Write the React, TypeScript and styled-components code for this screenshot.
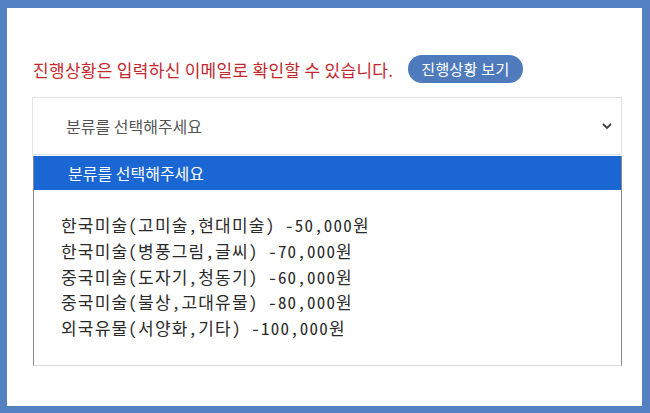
import * as React from 'react';
import styled, { createGlobalStyle } from 'styled-components';

const GlobalStyle = createGlobalStyle`
  html, body {
    margin: 0;
    padding: 0;
    background: #5380c0;
  }
  body {
    font-family: "Noto Sans CJK KR", "Noto Sans", sans-serif;
  }
`;

const Frame = styled.div`
  width: 650px;
  height: 413px;
  box-sizing: border-box;
  padding: 8px 8px 7px 7px;
  background: #5380c0;
`;

const Panel = styled.div`
  height: 100%;
  box-sizing: border-box;
  background: #fff;
  padding: 47px 20px 0 25px;
`;

const NoticeRow = styled.div`
  display: flex;
  align-items: center;
  gap: 15px;
  height: 28px;
  margin-left: 1px;
`;

const Notice = styled.span`
  color: #c4272d;
  font-size: 17px;
  letter-spacing: 0.3px;
`;

const PillButton = styled.button`
  height: 28px;
  padding: 0 13px;
  border: none;
  border-radius: 14px;
  background: #4f7bbd;
  color: #fff;
  font-family: inherit;
  font-size: 15px;
  letter-spacing: 0.3px;
  line-height: 28px;
  cursor: pointer;
`;

const SelectWrap = styled.div`
  position: relative;
  margin-top: 14px;
`;

const SelectBox = styled.div`
  height: 58px;
  box-sizing: border-box;
  border: 1px solid #e2e2e2;
  display: flex;
  align-items: center;
  justify-content: space-between;
  padding: 0 8px 0 33px;
  color: #555;
  font-size: 16px;
`;

const Menu = styled.div`
  position: absolute;
  top: 59px;
  left: 1px;
  right: 0;
  height: 210px;
  box-sizing: border-box;
  background: #fff;
  border-left: 1px solid #8a8a8a;
  border-right: 1px solid #8a8a8a;
  border-bottom: 1px solid #dcdcdc;
`;

const Option = styled.div<{ $active?: boolean }>`
  height: ${(p) => (p.$active ? '34px' : '25.7px')};
  display: flex;
  align-items: center;
  padding-left: ${(p) => (p.$active ? '34px' : '27px')};
  background: ${(p) => (p.$active ? '#1a66d2' : 'transparent')};
  color: ${(p) => (p.$active ? '#fff' : '#2a2a2a')};
  font-size: ${(p) => (p.$active ? '16px' : '17px')};
  font-feature-settings: ${(p) => (p.$active ? 'normal' : '"hwid" 1')};
  letter-spacing: ${(p) => (p.$active ? '0' : '1.2px')};
`;

const OptionList = styled.div`
  padding-top: 22px;
`;

const Chevron = () => (
  <svg width="12" height="12" viewBox="0 0 12 12">
    <path d="M2 4 L6 8 L10 4" fill="none" stroke="#444" strokeWidth="1.8" />
  </svg>
);

const options = [
  '한국미술(고미술,현대미술) -50,000원',
  '한국미술(병풍그림,글씨) -70,000원',
  '중국미술(도자기,청동기) -60,000원',
  '중국미술(불상,고대유물) -80,000원',
  '외국유물(서양화,기타) -100,000원',
];

export default function App() {
  return (
    <Frame>
      <GlobalStyle />
      <Panel>
        <NoticeRow>
          <Notice>진행상황은 입력하신 이메일로 확인할 수 있습니다.</Notice>
          <PillButton>진행상황 보기</PillButton>
        </NoticeRow>
        <SelectWrap>
          <SelectBox>
            <span>분류를 선택해주세요</span>
            <Chevron />
          </SelectBox>
          <Menu>
            <Option $active>분류를 선택해주세요</Option>
            <OptionList>
              {options.map((o) => (
                <Option key={o}>{o}</Option>
              ))}
            </OptionList>
          </Menu>
        </SelectWrap>
      </Panel>
    </Frame>
  );
}
